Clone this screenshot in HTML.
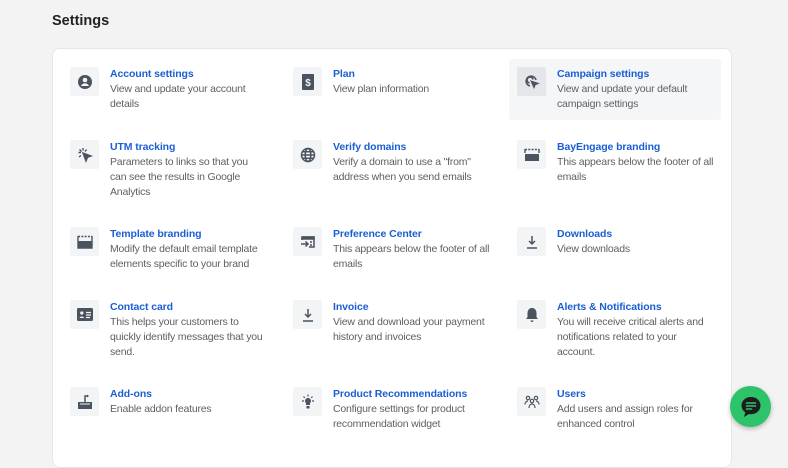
<!DOCTYPE html>
<html><head><meta charset="utf-8"><style>
*{margin:0;padding:0;box-sizing:border-box}
body{width:788px;height:446px;overflow:hidden;background:#f3f3f3;font-family:"Liberation Sans",Arial,sans-serif;position:relative}
h1{position:absolute;left:52px;top:13px;font-size:14.5px;font-weight:bold;color:#222}
.card{position:absolute;left:52px;top:48px;width:680px;height:420px;background:#fff;border:1px solid #e6e6e6;border-radius:8px}
.hl{position:absolute;left:509px;top:59px;width:212px;height:61px;background:#f5f6f8;border-radius:3px}
.it{position:absolute;width:200px}
.ic{position:absolute;left:0;top:0;width:29px;height:29px;background:#f3f4f6;border-radius:2px;display:flex;align-items:center;justify-content:center}
.hl2 .ic{background:#e4e6ea}
.tx{position:absolute;left:40px;top:0px;white-space:nowrap}
.t{font-size:10.5px;font-weight:bold;color:#1b5fd3;line-height:15px;letter-spacing:-0.1px}
.d{font-size:10.5px;color:#606060;line-height:15px;letter-spacing:-0.2px}
.chat{position:absolute;left:730px;top:386px;width:41px;height:41px;border-radius:50%;background:#2dc36a;box-shadow:0 2px 5px rgba(0,0,0,.25);display:flex;align-items:center;justify-content:center}
</style></head><body>
<h1>Settings</h1>
<div class="card"></div>
<div class="hl"></div>

<div class="it" style="left:70px;top:67px"><div class="ic"><svg width="16" height="16" viewBox="0 0 16 16"><circle cx="8" cy="8" r="7" fill="#4b5360"/><circle cx="8" cy="6" r="2.3" fill="#f3f4f6"/><path d="M4 12c1-2 2.5-2.6 4-2.6s3 .6 4 2.6" fill="#f3f4f6"/></svg></div><div class="tx"><div class="t">Account settings</div><div class="d">View and update your account<br>details</div></div></div>
<div class="it" style="left:293px;top:67px"><div class="ic"><svg width="12" height="16" viewBox="0 0 12 16"><rect x="0" y="0" width="12" height="16" rx="1" fill="#4b5360"/><text x="6" y="12" font-size="10" font-weight="bold" fill="#f3f4f6" text-anchor="middle" font-family="Liberation Sans">$</text></svg></div><div class="tx"><div class="t">Plan</div><div class="d">View plan information</div></div></div>
<div class="it hl2" style="left:517px;top:67px"><div class="ic"><svg width="16" height="16" viewBox="0 0 16 16" fill="none" stroke="#4b5360" stroke-width="1.6"><path d="M12 6A5 5 0 1 0 6 12"/><path d="M9 5.5A3 3 0 1 0 5.5 9"/><path d="M7.5 7.5l6 2-2.5 1-1 2.5z" fill="#4b5360"/></svg></div><div class="tx"><div class="t">Campaign settings</div><div class="d">View and update your default<br>campaign settings</div></div></div>

<div class="it" style="left:70px;top:140px"><div class="ic"><svg width="16" height="16" viewBox="0 0 16 16" stroke="#4b5360" stroke-width="1.4"><path d="M6 1v2.5M1.5 5.5H4M2.5 2.5l2 2M2 10l2-1.5M9.5 2.5l-1.5 2"/><path d="M6 6l8 3-3.5 1.2L9 14z" fill="#4b5360"/></svg></div><div class="tx"><div class="t">UTM tracking</div><div class="d">Parameters to links so that you<br>can see the results in Google<br>Analytics</div></div></div>
<div class="it" style="left:293px;top:140px"><div class="ic"><svg width="16" height="16" viewBox="0 0 16 16" fill="none" stroke="#4b5360" stroke-width="1.5"><circle cx="8" cy="8" r="6.5"/><ellipse cx="8" cy="8" rx="2.8" ry="6.5"/><path d="M1.5 8h13M2.5 4.8h11M2.5 11.2h11"/></svg></div><div class="tx"><div class="t">Verify domains</div><div class="d">Verify a domain to use a "from"<br>address when you send emails</div></div></div>
<div class="it" style="left:517px;top:140px"><div class="ic"><svg width="16" height="14" viewBox="0 0 16 14"><path d="M1 1.5h14" stroke="#4b5360" stroke-width="1.4" stroke-dasharray="2 1.3"/><path d="M1 1v4M15 1v4" stroke="#4b5360" stroke-width="1.4"/><rect x="1" y="6" width="14" height="7" fill="#4b5360"/></svg></div><div class="tx"><div class="t">BayEngage branding</div><div class="d">This appears below the footer of all<br>emails</div></div></div>

<div class="it" style="left:70px;top:227px"><div class="ic"><svg width="16" height="14" viewBox="0 0 16 14"><path d="M1 1.5h14" stroke="#4b5360" stroke-width="1.4" stroke-dasharray="2 1.3"/><path d="M1 1v12h14V1" stroke="#4b5360" stroke-width="1.4" fill="none"/><rect x="1" y="6" width="14" height="7" fill="#4b5360"/></svg></div><div class="tx"><div class="t">Template branding</div><div class="d">Modify the default email template<br>elements specific to your brand</div></div></div>
<div class="it" style="left:293px;top:227px"><div class="ic"><svg width="16" height="16" viewBox="0 0 16 16" fill="none" stroke="#4b5360" stroke-width="1.5"><path d="M2 3h12v10H9M2 3v3"/><path d="M2 3h12v2H2z" fill="#4b5360"/><path d="M1 10h7M5.5 7.5L8 10l-2.5 2.5M10 8h2M10 11h2"/></svg></div><div class="tx"><div class="t">Preference Center</div><div class="d">This appears below the footer of all<br>emails</div></div></div>
<div class="it" style="left:517px;top:227px"><div class="ic"><svg width="14" height="14" viewBox="0 0 14 14" fill="none" stroke="#4b5360" stroke-width="1.5"><path d="M7 1v8M4 6l3 3 3-3M2 13h10"/></svg></div><div class="tx"><div class="t">Downloads</div><div class="d">View downloads</div></div></div>

<div class="it" style="left:70px;top:300px"><div class="ic"><svg width="16" height="13" viewBox="0 0 16 13"><rect width="16" height="13" rx="1.5" fill="#4b5360"/><circle cx="4.8" cy="5" r="1.6" fill="#f3f4f6"/><path d="M2.5 10c.5-2 4-2 4.6 0z" fill="#f3f4f6"/><path d="M9 4.5h5M9 7h5M9 9.5h4" stroke="#f3f4f6" stroke-width="1.2"/></svg></div><div class="tx"><div class="t">Contact card</div><div class="d">This helps your customers to<br>quickly identify messages that you<br>send.</div></div></div>
<div class="it" style="left:293px;top:300px"><div class="ic"><svg width="14" height="14" viewBox="0 0 14 14" fill="none" stroke="#4b5360" stroke-width="1.5"><path d="M7 1v8M4 6l3 3 3-3M2 13h10"/></svg></div><div class="tx"><div class="t">Invoice</div><div class="d">View and download your payment<br>history and invoices</div></div></div>
<div class="it" style="left:517px;top:300px"><div class="ic"><svg width="14" height="16" viewBox="0 0 14 16"><path d="M7 1c-3 0-4.5 2.5-4.5 5v4L1 12h12l-1.5-2V6C11.5 3.5 10 1 7 1z" fill="#4b5360"/><path d="M5.5 13.5a1.5 1.5 0 0 0 3 0z" fill="#4b5360"/></svg></div><div class="tx"><div class="t">Alerts &amp; Notifications</div><div class="d">You will receive critical alerts and<br>notifications related to your<br>account.</div></div></div>

<div class="it" style="left:70px;top:387px"><div class="ic"><svg width="16" height="16" viewBox="0 0 16 16"><path d="M1 8h14v7H1z" fill="#4b5360"/><path d="M3 10h10" stroke="#f3f4f6" stroke-width="1"/><path d="M8 9V2h3" stroke="#4b5360" stroke-width="1.5" fill="none"/><path d="M10 0.5l2 1.5-2 1.5z" fill="#4b5360"/></svg></div><div class="tx"><div class="t">Add-ons</div><div class="d">Enable addon features</div></div></div>
<div class="it" style="left:293px;top:387px"><div class="ic"><svg width="16" height="16" viewBox="0 0 16 16"><path d="M8 4a3 3 0 0 0-2 5.2V11h4V9.2A3 3 0 0 0 8 4z" fill="#4b5360"/><rect x="6.5" y="12" width="3" height="2.5" fill="#4b5360"/><path d="M8 0.5v2M2 7h2M12 7h2M3.5 2.5l1.3 1.3M12.5 2.5l-1.3 1.3" stroke="#4b5360" stroke-width="1.2"/></svg></div><div class="tx"><div class="t">Product Recommendations</div><div class="d">Configure settings for product<br>recommendation widget</div></div></div>
<div class="it" style="left:517px;top:387px"><div class="ic"><svg width="16" height="14" viewBox="0 0 16 14" fill="none" stroke="#4b5360" stroke-width="1.2"><circle cx="4" cy="3" r="1.7"/><circle cx="12" cy="3" r="1.7"/><circle cx="8" cy="6" r="1.7"/><path d="M1 9.5c0-2 1.5-3.5 3-3.5M15 9.5c0-2-1.5-3.5-3-3.5M5 13c0-2.5 1.3-4 3-4s3 1.5 3 4"/></svg></div><div class="tx"><div class="t">Users</div><div class="d">Add users and assign roles for<br>enhanced control</div></div></div>

<div class="chat"><svg width="24" height="24" viewBox="0 0 24 24"><path d="M12 2C6.5 2 2.5 5.8 2.5 10.5c0 2.8 1.5 5.3 3.8 6.8L5 22l5-3c.6.1 1.3.2 2 .2 5.5 0 9.5-3.9 9.5-8.7S17.5 2 12 2z" fill="#1d1d1d"/><path d="M7.5 8h9M7.5 11h9M7.5 14h5" stroke="#2dc36a" stroke-width="1.6" stroke-linecap="round"/></svg></div>
</body></html>
